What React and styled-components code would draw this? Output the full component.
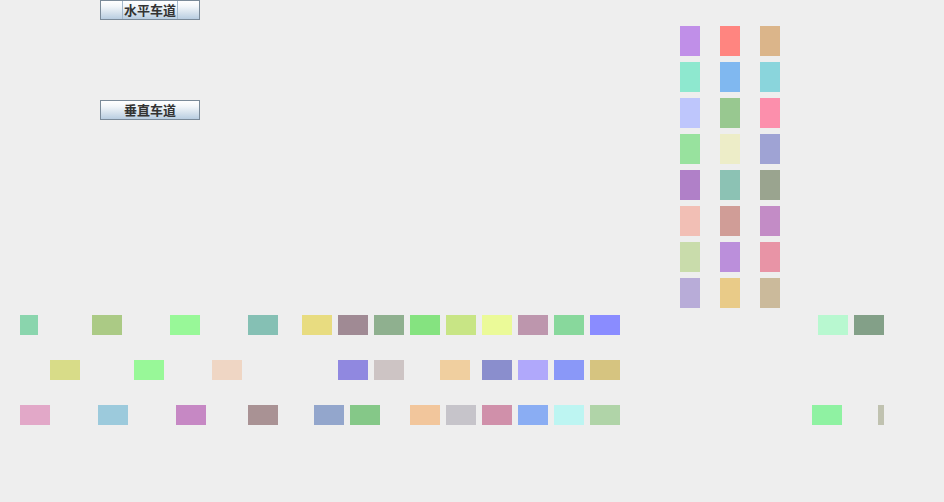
import React from "react";
import styled, { createGlobalStyle } from "styled-components";

const GlobalStyle = createGlobalStyle`
  html, body {
    margin: 0;
    padding: 0;
    background: #eeeeee;
  }
`;

const Frame = styled.div`
  width: 944px;
  height: 502px;
  background: #eeeeee;
  overflow: hidden;
  display: flex;
  flex-direction: column;
`;

const Top = styled.div`
  display: flex;
  height: 315px;
`;

const Controls = styled.div`
  width: 580px;
  padding-left: 100px;
  display: flex;
  flex-direction: column;
  gap: 80px;
`;

const LaneButton = styled.button`
  box-sizing: border-box;
  width: 100px;
  height: 20px;
  margin: 0;
  padding: 0;
  border: 1px solid #7a8a99;
  background: linear-gradient(#ffffff 0%, #f2f6fa 30%, #dae5ef 60%, #b8cde1 100%);
  font-family: "Noto Sans CJK SC", "Noto Sans", sans-serif;
  font-weight: bold;
  font-size: 13px;
  line-height: 18px;
  color: #333;
  display: flex;
  align-items: center;
  justify-content: center;
  cursor: pointer;
`;

const Label = styled.span`
  box-sizing: border-box;
  height: 18px;
  padding: 0 1px;
  border-left: 1px solid ${(p) => (p.focused ? "#a3b8cc" : "transparent")};
  border-right: 1px solid ${(p) => (p.focused ? "#a3b8cc" : "transparent")};
`;

const VerticalLanes = styled.div`
  padding-top: 26px;
  display: grid;
  grid-template-columns: repeat(3, 20px);
  grid-auto-rows: 30px;
  column-gap: 20px;
  row-gap: 6px;
`;

const Car = styled.div`
  width: ${(p) => p.w || 30}px;
  height: 20px;
  background: ${(p) => p.color};
`;

const VCar = styled.div`
  width: 20px;
  height: 30px;
  background: ${(p) => p.color};
`;

const Road = styled.div`
  display: flex;
  flex-direction: column;
  gap: 25px;
`;

const Lane = styled.div`
  position: relative;
  height: 20px;
  ${Car} {
    position: absolute;
    top: 0;
  }
`;

const vertical = [
  "#c08fe8", "#ff8580", "#dbb58a",
  "#8ee8cf", "#80b8f0", "#8ad5dc",
  "#bec6fc", "#98c890", "#fc8fac",
  "#98e29e", "#ededc8", "#9fa3d4",
  "#b080c8", "#8cc2b4", "#9aa48f",
  "#f2bfb5", "#d09d97", "#c38cc6",
  "#c9dcab", "#bb8fdb", "#e894a6",
  "#b8acd8", "#e9cb88", "#cbba9b",
];

const lanes = [
  [
    [20, "#8ad5ad", 18], [92, "#abca85"], [170, "#98f898"], [248, "#85c0b4"],
    [302, "#e8dc80"], [338, "#a08a94"], [374, "#8fb08f"], [410, "#85e380"],
    [446, "#c8e585"], [482, "#ebfa98"], [518, "#bd96ad"], [554, "#88d89c"],
    [590, "#8a8cff"], [818, "#b8f8d0"], [854, "#83a088"],
  ],
  [
    [50, "#d8dc88"], [134, "#98f898"], [212, "#efd6c4"], [338, "#9088e0"],
    [374, "#cdc4c4"], [440, "#f0cf9f"], [482, "#8a8ecd"], [518, "#b0a8fb"],
    [554, "#8a98f8"], [590, "#d6c480"],
  ],
  [
    [20, "#e2a8c8"], [98, "#9ccadc"], [176, "#c688c4"], [248, "#a99294"],
    [314, "#93a6cc"], [350, "#85c888"], [410, "#f2c69c"], [446, "#c6c4ca"],
    [482, "#d090aa"], [518, "#8aadf3"], [554, "#bdf5f2"], [590, "#b0d4a8"],
    [812, "#8ff2a2"], [878, "#c0c2b0", 6],
  ],
];

export default function App() {
  return (
    <>
      <GlobalStyle />
      <Frame>
        <Top>
          <Controls>
            <LaneButton>
              <Label focused>水平车道</Label>
            </LaneButton>
            <LaneButton>
              <Label>垂直车道</Label>
            </LaneButton>
          </Controls>
          <VerticalLanes>
            {vertical.map((c, i) => (
              <VCar key={i} color={c} />
            ))}
          </VerticalLanes>
        </Top>
        <Road>
          {lanes.map((lane, i) => (
            <Lane key={i}>
              {lane.map(([x, c, w], j) => (
                <Car key={j} color={c} w={w} style={{ left: x }} />
              ))}
            </Lane>
          ))}
        </Road>
      </Frame>
    </>
  );
}
